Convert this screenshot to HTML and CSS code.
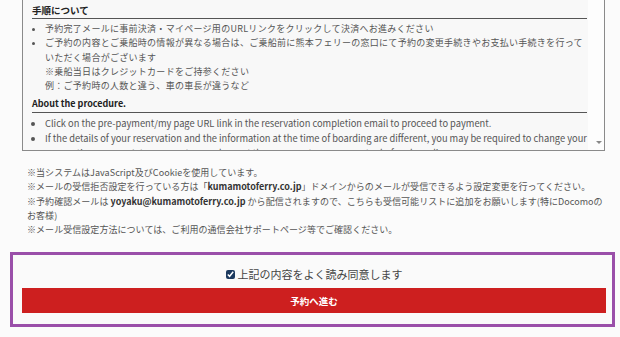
FILE: index.html
```html
<!DOCTYPE html>
<html lang="ja">
<head>
<meta charset="utf-8">
<link rel="stylesheet" href="styles.css">
</head>
<body>
<div class="page">
  <div class="terms">
    <div class="terms-body">
      <h4 class="terms-title">手順について</h4>
      <ul class="terms-list">
        <li>予約完了メールに事前決済・マイページ用のURLリンクをクリックして決済へお進みください</li>
        <li>ご予約の内容とご乗船時の情報が異なる場合は、ご乗船前に熊本フェリーの窓口にて予約の変更手続きやお支払い手続きを行っていただく場合がございます<br>※乗船当日はクレジットカードをご持参ください<br>例：ご予約時の人数と違う、車の車長が違うなど</li>
      </ul>
      <h4 class="terms-title en">About the procedure.</h4>
      <ul class="terms-list en-list">
        <li>Click on the pre-payment/my page URL link in the reservation completion email to proceed to payment.</li>
        <li>If the details of your reservation and the information at the time of boarding are different, you may be required to change your reservation or complete payment procedures at the Kumamoto Ferry counter before boarding.</li>
      </ul>
    </div>
    <div class="scrollbar"><span class="arrow"></span></div>
  </div>

  <div class="notes">
    <p>※当システムはJavaScript及びCookieを使用しています。</p>
    <p>※メールの受信拒否設定を行っている方は「<b>kumamotoferry.co.jp</b>」ドメインからのメールが受信できるよう設定変更を行ってください。</p>
    <p>※予約確認メールは <b>yoyaku@kumamotoferry.co.jp</b> から配信されますので、こちらも受信可能リストに追加をお願いします(特にDocomoのお客様)</p>
    <p>※メール受信設定方法については、ご利用の通信会社サポートページ等でご確認ください。</p>
  </div>

  <div class="agree">
    <label class="agree-label"><input type="checkbox" class="agree-check" checked> 上記の内容をよく読み同意します</label>
    <button class="submit" type="button">予約へ進む</button>
  </div>
</div>
</body>
</html>
```

FILE: styles.css
```css
* { box-sizing: border-box; }
html, body { margin: 0; padding: 0; }
body {
  background: #fbfbfb;
  font-family: "Noto Sans CJK JP", "Noto Sans", sans-serif;
  color: #444;
  width: 620px;
  height: 337px;
  overflow: hidden;
}
.page {
  padding: 0 5px 0 10px;
}
.terms {
  display: flex;
  margin: -20px 10px 0 12px;
  height: 171px;
  border: 1px solid #8a8a8a;
  background: #fdfdfd;
  overflow: hidden;
}
.terms-body {
  flex: 1;
  background: #f8f8f8;
  padding: 20px 1px 0 9px;
  overflow: hidden;
}
.scrollbar {
  width: 16px;
  display: flex;
  flex-direction: column;
  justify-content: flex-end;
  align-items: center;
  padding-bottom: 6px;
}
.arrow {
  width: 0;
  height: 0;
  border-left: 3px solid transparent;
  border-right: 3px solid transparent;
  border-top: 3px solid #888;
  margin-left: 6px;
}
.terms-title {
  margin: 0;
  font-size: 9.5px;
  line-height: 14px;
  font-weight: bold;
  color: #222;
  padding: 2px 0 1px;
  border-bottom: 1px solid #555;
}
.terms-title.en {
  margin-top: 2px;
  font-size: 9px;
}
.terms-list {
  margin: 3px 0 0;
  padding: 0 0 0 13px;
  font-size: 9px;
  letter-spacing: 0.28px;
  line-height: 14.25px;
  color: #555;
}
.terms-list.en-list {
  font-size: 9.3px;
  letter-spacing: 0;
  line-height: 15px;
}
.terms-list li { padding-left: 0; }

.notes {
  margin: 15px 12px 0 17px;
  font-size: 9px;
  letter-spacing: 0.05px;
  line-height: 14.3px;
  color: #555;
}
.notes p { margin: 0; }
.notes b { color: #333; letter-spacing: 0; }

.agree {
  margin-top: 15px;
  border: 3px solid #9a4fa9;
  background: #fafafa;
  padding: 11px 6px 11px 9px;
  display: flex;
  flex-direction: column;
  align-items: center;
  gap: 6px;
}
.agree-label {
  display: flex;
  align-items: center;
  gap: 3px;
  font-size: 11px;
  line-height: 16px;
  color: #444;
}
.agree-check {
  margin: 0;
  width: 9px;
  height: 9px;
  accent-color: #1d3a5f;
}
.submit {
  width: 100%;
  height: 25px;
  border: 0;
  background: #cd1f1f;
  color: #fff;
  font-family: inherit;
  font-size: 9.5px;
  font-weight: bold;
  padding: 0;
}
```
